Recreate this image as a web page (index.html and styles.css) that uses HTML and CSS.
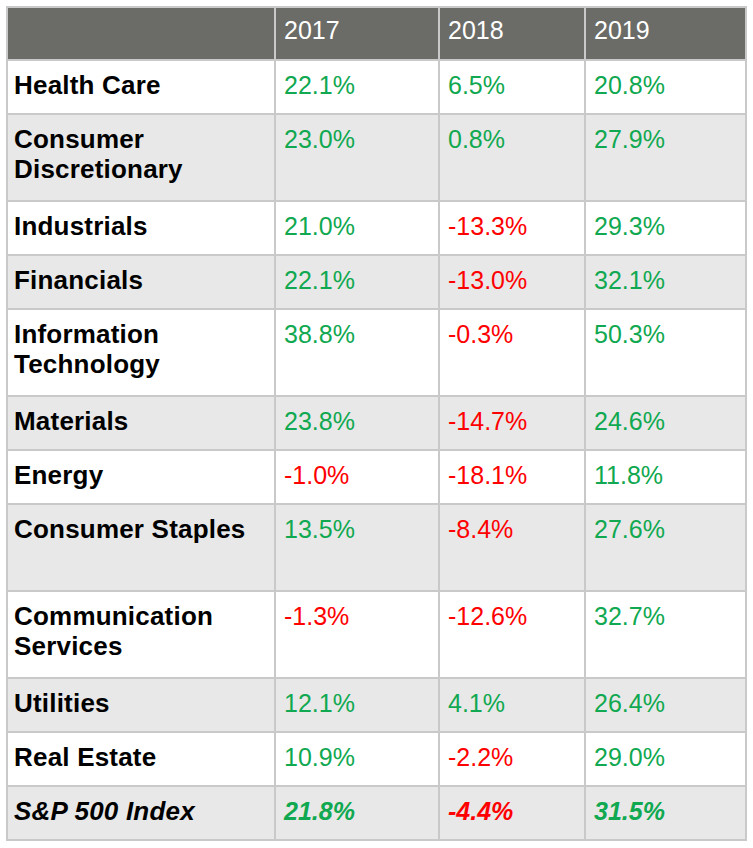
FILE: index.html
```html
<!DOCTYPE html>
<html>
<head>
<meta charset="utf-8">
<link rel="stylesheet" href="styles.css">
</head>
<body>
<table class="returns">
  <colgroup>
    <col class="c-label"><col class="c-y"><col class="c-y2"><col class="c-y3">
  </colgroup>
  <thead>
    <tr class="head"><th></th><th>2017</th><th>2018</th><th>2019</th></tr>
  </thead>
  <tbody>
    <tr class="row"><td class="lbl">Health Care</td><td class="up">22.1%</td><td class="up">6.5%</td><td class="up">20.8%</td></tr>
    <tr class="row tall alt"><td class="lbl">Consumer<br>Discretionary</td><td class="up">23.0%</td><td class="up">0.8%</td><td class="up">27.9%</td></tr>
    <tr class="row"><td class="lbl">Industrials</td><td class="up">21.0%</td><td class="dn">-13.3%</td><td class="up">29.3%</td></tr>
    <tr class="row alt"><td class="lbl">Financials</td><td class="up">22.1%</td><td class="dn">-13.0%</td><td class="up">32.1%</td></tr>
    <tr class="row tall"><td class="lbl">Information<br>Technology</td><td class="up">38.8%</td><td class="dn">-0.3%</td><td class="up">50.3%</td></tr>
    <tr class="row alt"><td class="lbl">Materials</td><td class="up">23.8%</td><td class="dn">-14.7%</td><td class="up">24.6%</td></tr>
    <tr class="row"><td class="lbl">Energy</td><td class="dn">-1.0%</td><td class="dn">-18.1%</td><td class="up">11.8%</td></tr>
    <tr class="row tall alt"><td class="lbl">Consumer Staples</td><td class="up">13.5%</td><td class="dn">-8.4%</td><td class="up">27.6%</td></tr>
    <tr class="row tall"><td class="lbl">Communication<br>Services</td><td class="dn">-1.3%</td><td class="dn">-12.6%</td><td class="up">32.7%</td></tr>
    <tr class="row alt"><td class="lbl">Utilities</td><td class="up">12.1%</td><td class="up">4.1%</td><td class="up">26.4%</td></tr>
    <tr class="row"><td class="lbl">Real Estate</td><td class="up">10.9%</td><td class="dn">-2.2%</td><td class="up">29.0%</td></tr>
    <tr class="row alt total"><td class="lbl">S&amp;P 500 Index</td><td class="up">21.8%</td><td class="dn">-4.4%</td><td class="up">31.5%</td></tr>
  </tbody>
</table>
</body>
</html>
```
FILE: styles.css
```css
html, body {
  margin: 0;
  padding: 0;
  background: #ffffff;
}
body {
  padding: 6px 0 0 6px;
  font-family: "Liberation Sans", Arial, sans-serif;
}
.returns {
  border-collapse: collapse;
  table-layout: fixed;
  width: 739px;
  border: 2px solid #c6c6c6;
}
.c-label { width: 268px; }
.c-y { width: 164px; }
.c-y2 { width: 146px; }
.c-y3 { width: 161px; }
.returns th, .returns td {
  border: 2px solid #c9c9c9;
  text-align: left;
  vertical-align: top;
  font-size: 25px;
  line-height: 30px;
  padding: 9px 8px 0 8px;
  box-sizing: border-box;
}
.head th {
  background: #6b6c67;
  color: #ffffff;
  font-weight: normal;
  height: 53px;
  padding-top: 7px;
  border-color: #c9c9c9;
}
.row td { height: 54px; background: #ffffff; }
.row.tall td { height: 87px; }
.row.alt td { background: #e8e8e8; }
.returns td.lbl {
  font-weight: bold;
  color: #000000;
  font-size: 26px;
  letter-spacing: 0.2px;
  padding-left: 6px;
}
.up { color: #10a850; }
.dn { color: #ff0000; }
.total td { font-weight: bold; font-style: italic; }
```
